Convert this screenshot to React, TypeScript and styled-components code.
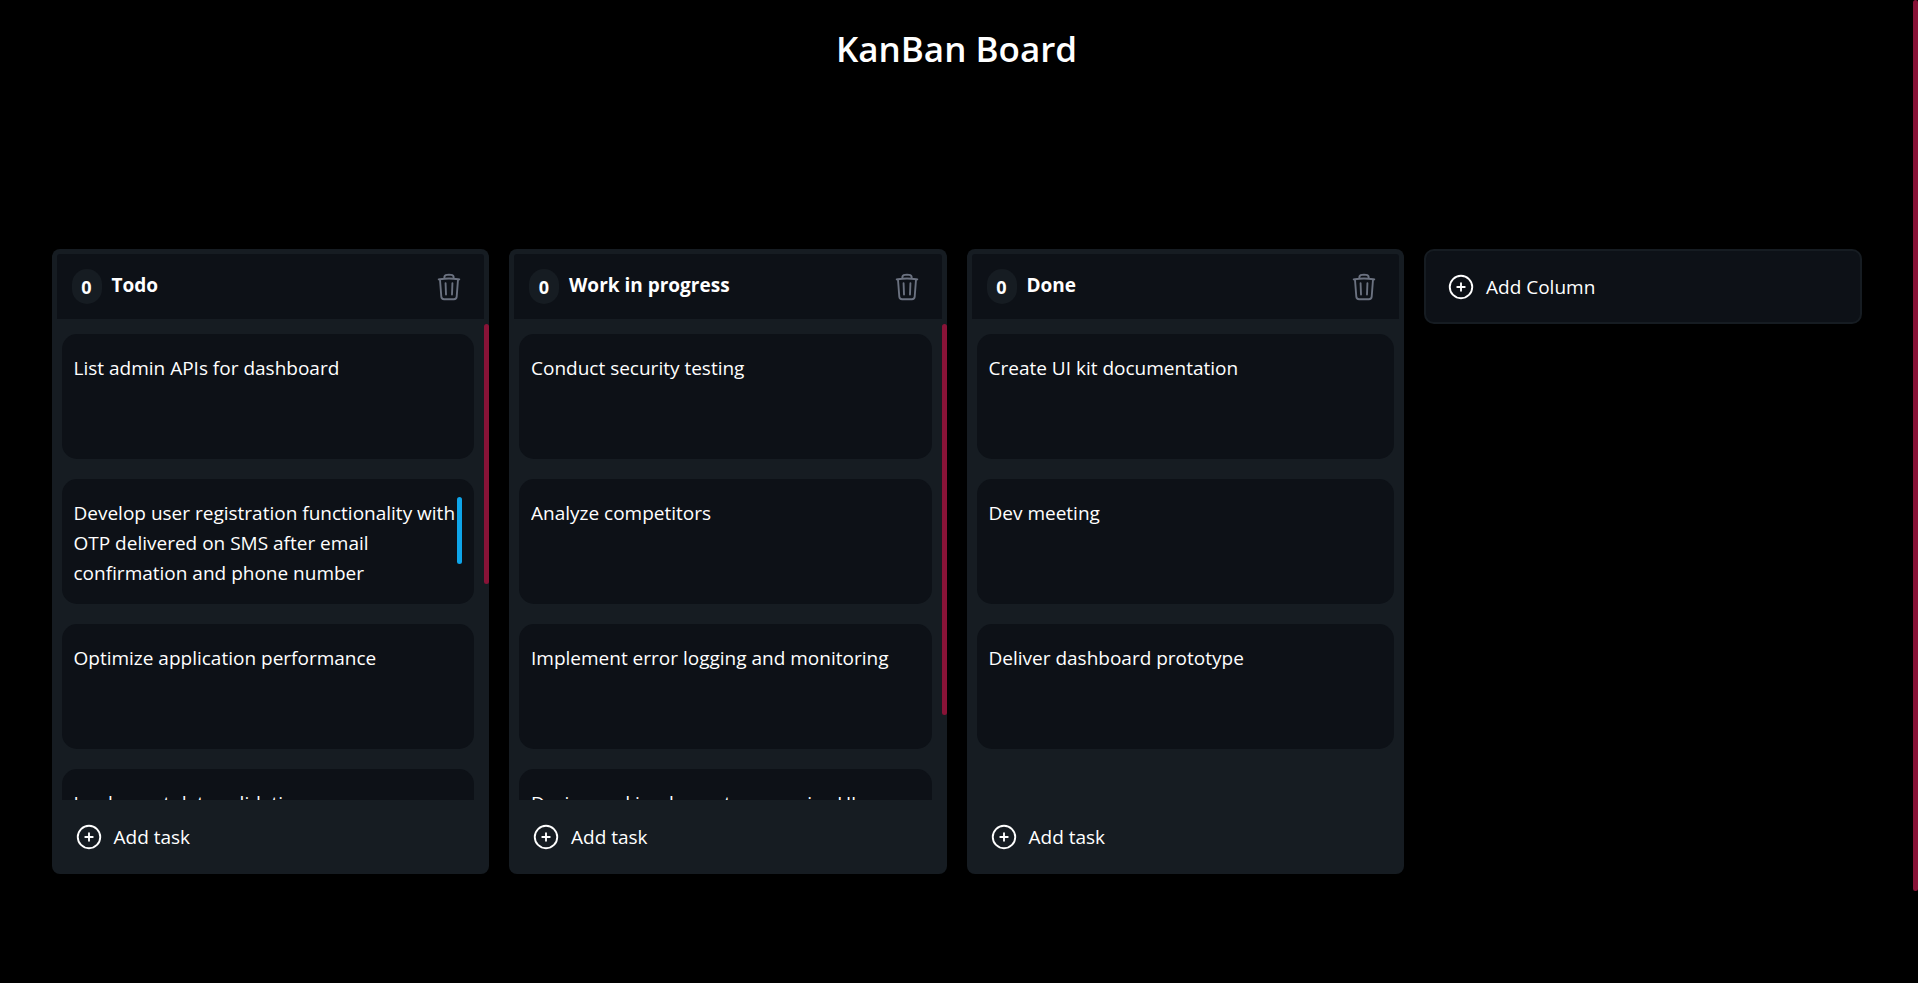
import { useLayoutEffect, useRef, useState, type ReactNode } from "react";
import styled, { createGlobalStyle } from "styled-components";

const colors = {
  page: "#000000",
  main: "#0d1117",
  column: "#161c22",
  rose: "#881337",
  sky: "#0ea5e9",
  muted: "#6b7280",
};

const GlobalStyle = createGlobalStyle`
  *, *::before, *::after { box-sizing: border-box; }
  body {
    margin: 0;
    background: ${colors.page};
    color: #fff;
    font-family: "Segoe UI", "Open Sans", "Noto Sans", sans-serif;
    font-size: 19px;
    line-height: 30px;
  }
  button { font: inherit; color: inherit; cursor: pointer; }
  h1, h2, p, ul { margin: 0; padding: 0; }
`;

const ScrollFrame = styled.div`
  position: relative;
  display: flex;
  flex: 1;
  min-height: 0;
`;

const Viewport = styled.div<{ $gutter: boolean }>`
  flex: 1;
  min-width: 0;
  margin-right: ${(p) => (p.$gutter ? 5 : 0)}px;
  overflow-x: hidden;
  overflow-y: auto;
  scrollbar-width: none;
`;

const Thumb = styled.div<{ $color: string }>`
  position: absolute;
  top: 0;
  right: 0;
  width: 5px;
  border-radius: 3px;
  background: ${(p) => p.$color};
`;

function ScrollArea({ color, children }: { color: string; children: ReactNode }) {
  const ref = useRef<HTMLDivElement>(null);
  const [thumb, setThumb] = useState({ top: 0, height: 0 });

  const measure = () => {
    const el = ref.current;
    if (!el) return;
    const ratio = el.clientHeight / el.scrollHeight;
    const next =
      ratio < 1
        ? { top: Math.round(el.scrollTop * ratio), height: Math.round(el.clientHeight * ratio) }
        : { top: 0, height: 0 };
    setThumb((old) => (old.top === next.top && old.height === next.height ? old : next));
  };

  useLayoutEffect(() => {
    measure();
    window.addEventListener("resize", measure);
    return () => window.removeEventListener("resize", measure);
  });

  return (
    <ScrollFrame>
      <Viewport ref={ref} $gutter={thumb.height > 0} onScroll={measure}>
        {children}
      </Viewport>
      {thumb.height > 0 && <Thumb $color={color} style={thumb} />}
    </ScrollFrame>
  );
}

const Page = styled.div`
  display: flex;
  height: 100vh;
`;

const Content = styled.main`
  min-height: calc(100vh + 101px);
`;

const Title = styled.h1`
  padding-top: 24px;
  font-size: 35px;
  line-height: 50px;
  font-weight: 600;
  text-align: center;
`;

const Board = styled.div`
  display: grid;
  grid-template-columns: repeat(4, minmax(0, 1fr));
  align-items: start;
  gap: 20px;
  max-width: 1810px;
  margin: 0 auto;
  padding-top: 175px;
`;

const ColumnBox = styled.section`
  display: flex;
  flex-direction: column;
  height: 625px;
  border-radius: 8px;
  background: ${colors.column};
`;

const ColumnHeader = styled.header`
  display: flex;
  align-items: center;
  gap: 10px;
  height: 65px;
  margin: 5px 5px 0;
  padding: 0 15px;
  border-radius: 3px 3px 0 0;
  background: ${colors.main};
`;

const Count = styled.span`
  display: grid;
  place-items: center;
  width: 30px;
  height: 35px;
  border-radius: 15px;
  background: ${colors.column};
  font-size: 18px;
  font-weight: 700;
`;

const ColumnTitle = styled.h2`
  flex: 1;
  padding-bottom: 3px;
  font-size: 19px;
  font-weight: 700;
`;

const DeleteButton = styled.button`
  display: flex;
  padding: 5px;
  border: 0;
  background: none;
  color: ${colors.muted};
`;

const ListSlot = styled.div`
  display: flex;
  flex: 1;
  min-height: 0;
  margin-top: 5px;
`;

const TaskList = styled.ul`
  display: flex;
  flex-direction: column;
  gap: 20px;
  && { padding: 10px; }
  list-style: none;
`;

const TaskCard = styled.li`
  display: flex;
  height: 125px;
  padding: 18px 12px 17px;
  border-radius: 15px;
  background: ${colors.main};
`;

const TaskText = styled.p`
  && { padding-top: 1px; }
`;

const AddTaskButton = styled.button`
  display: flex;
  align-items: center;
  gap: 10px;
  height: 74px;
  padding: 0 22px;
  border: 0;
  background: none;
  text-align: left;
`;

const AddColumnButton = styled(AddTaskButton)`
  height: 75px;
  padding: 0 20px;
  border: 2px solid ${colors.column};
  border-radius: 10px;
  background: ${colors.main};
`;

const PlusIcon = () => (
  <svg width="30" height="30" viewBox="0 0 24 24" fill="none" stroke="currentColor" strokeWidth="1.5" strokeLinecap="round" strokeLinejoin="round" aria-hidden="true">
    <path d="M12 9v6m3-3H9m12 0a9 9 0 1 1-18 0 9 9 0 0 1 18 0Z" />
  </svg>
);

const TrashIcon = () => (
  <svg width="30" height="30" viewBox="0 0 24 24" fill="none" stroke="currentColor" strokeWidth="1.5" strokeLinecap="round" strokeLinejoin="round" aria-hidden="true">
    <path d="m14.74 9-.346 9m-4.788 0L9.26 9m9.968-3.21c.342.052.682.107 1.022.166m-1.022-.165L18.16 19.673a2.25 2.25 0 0 1-2.244 2.077H8.084a2.25 2.25 0 0 1-2.244-2.077L4.772 5.79m14.456 0a48.108 48.108 0 0 0-3.478-.397m-12 .562c.34-.059.68-.114 1.022-.165m0 0a48.11 48.11 0 0 1 3.478-.397m7.5 0v-.916c0-1.18-.91-2.164-2.09-2.201a51.964 51.964 0 0 0-3.32 0c-1.18.037-2.09 1.022-2.09 2.201v.916m7.5 0a48.667 48.667 0 0 0-7.5 0" />
  </svg>
);

type Column = { title: string; tasks: string[] };

const initialColumns: Column[] = [
  {
    title: "Todo",
    tasks: [
      "List admin APIs for dashboard",
      "Develop user registration functionality with OTP delivered on SMS after email confirmation and phone number confirmation",
      "Optimize application performance",
      "Implement data validation",
      "Set up continuous integration",
      "Write API documentation",
    ],
  },
  {
    title: "Work in progress",
    tasks: [
      "Conduct security testing",
      "Analyze competitors",
      "Implement error logging and monitoring",
      "Design and implement responsive UI",
    ],
  },
  {
    title: "Done",
    tasks: ["Create UI kit documentation", "Dev meeting", "Deliver dashboard prototype"],
  },
];

export default function App() {
  const [columns, setColumns] = useState(initialColumns);

  const addTask = (index: number) =>
    setColumns(columns.map((c, i) => (i === index ? { ...c, tasks: [...c.tasks, `Task ${c.tasks.length + 1}`] } : c)));

  return (
    <Page>
      <GlobalStyle />
      <ScrollArea color={colors.rose}>
        <Content>
          <Title>KanBan Board</Title>
          <Board>
            {columns.map((column, index) => (
              <ColumnBox key={index}>
                <ColumnHeader>
                  <Count>0</Count>
                  <ColumnTitle>{column.title}</ColumnTitle>
                  <DeleteButton
                    type="button"
                    aria-label={`Delete ${column.title}`}
                    onClick={() => setColumns(columns.filter((_, i) => i !== index))}
                  >
                    <TrashIcon />
                  </DeleteButton>
                </ColumnHeader>
                <ListSlot>
                  <ScrollArea color={colors.rose}>
                    <TaskList>
                      {column.tasks.map((task) => (
                        <TaskCard key={task}>
                          <ScrollArea color={colors.sky}>
                            <TaskText>{task}</TaskText>
                          </ScrollArea>
                        </TaskCard>
                      ))}
                    </TaskList>
                  </ScrollArea>
                </ListSlot>
                <AddTaskButton type="button" onClick={() => addTask(index)}>
                  <PlusIcon />
                  Add task
                </AddTaskButton>
              </ColumnBox>
            ))}
            <AddColumnButton
              type="button"
              onClick={() => setColumns([...columns, { title: `Column ${columns.length + 1}`, tasks: [] }])}
            >
              <PlusIcon />
              Add Column
            </AddColumnButton>
          </Board>
        </Content>
      </ScrollArea>
    </Page>
  );
}
